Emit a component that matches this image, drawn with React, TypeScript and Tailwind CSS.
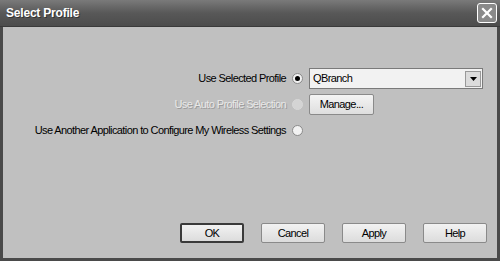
export default function App() {
  return (
    <div className="w-[500px] h-[261px] flex flex-col bg-[#4a4a4a] font-['Liberation_Sans',Arial,sans-serif] text-[11px] tracking-[-0.6px] text-black overflow-hidden">
      {/* Title bar */}
      <div className="h-[27px] flex items-center justify-between pl-[6px] pr-[3px] bg-gradient-to-b from-[#7a7a7a] via-[#585858] to-[#4c4c4c] border-b border-[#3a3a3a]">
        <span className="text-white font-bold text-[12px] tracking-[-0.2px] [text-shadow:1px_1px_0_#333]">Select Profile</span>
        <button className="w-[20px] h-[20px] rounded-[3px] border border-white bg-[#8a8a8a] flex items-center justify-center">
          <svg width="12" height="12" viewBox="0 0 12 12">
            <path d="M2 2 L10 10 M10 2 L2 10" stroke="white" strokeWidth="2.2" strokeLinecap="square" />
          </svg>
        </button>
      </div>

      {/* Body */}
      <div className="flex-1 mx-[3px] mb-[3px] bg-[#c0c0c0] flex flex-col">
        <div className="grid grid-cols-[1fr_auto_auto] gap-x-[6px] gap-y-[5px] items-center pt-[41px] pr-[14px] whitespace-nowrap">
          <span className="text-right">Use Selected Profile</span>
          <Radio checked />
          <div className="w-[174px] h-[21px] bg-[#f2f2f2] border border-[#7a7a7a] flex items-center justify-between pl-[3px] pr-[1px]">
            <span>QBranch</span>
            <div className="w-[16px] h-[16px] bg-[#dcdcdc] border border-[#999] flex items-center justify-center">
              <svg width="7" height="4" viewBox="0 0 7 4">
                <path d="M0 0 H7 L3.5 4 Z" fill="black" />
              </svg>
            </div>
          </div>

          <span className="text-right text-[#e8e8e8] [text-shadow:1px_1px_0_#9a9a9a]">Use Auto Profile Selection</span>
          <Radio disabled />
          <div>
            <button className="w-[65px] h-[21px] bg-gradient-to-b from-[#f4f4f4] to-[#dedede] border border-[#8a8a8a] rounded-[2px]">Manage...</button>
          </div>

          <span className="text-right">Use Another Application to Configure My Wireless Settings</span>
          <Radio />
          <div className="h-[21px]" />
        </div>

        <div className="mt-auto mb-[15px] flex justify-end gap-[17px] pr-[10px]">
          <Btn label="OK" primary />
          <Btn label="Cancel" />
          <Btn label="Apply" />
          <Btn label="Help" />
        </div>
      </div>
    </div>
  );
}

function Radio({ checked, disabled }: { checked?: boolean; disabled?: boolean }) {
  return (
    <div
      className={`w-[11px] h-[11px] rounded-full border flex items-center justify-center ${
        disabled ? "border-[#d8d8d8] bg-[#d4d4d4]" : "border-[#8a8a8a] bg-[#f2f2f2]"
      }`}
    >
      {checked && <div className="w-[5px] h-[5px] rounded-full bg-black" />}
    </div>
  );
}

function Btn({ label, primary }: { label: string; primary?: boolean }) {
  return (
    <button
      className={`w-[64px] h-[20px] rounded-[2px] bg-gradient-to-b from-[#f2f2f2] to-[#dcdcdc] ${
        primary ? "border-2 border-[#3a3a3a]" : "border border-[#8a8a8a]"
      }`}
    >
      {label}
    </button>
  );
}
